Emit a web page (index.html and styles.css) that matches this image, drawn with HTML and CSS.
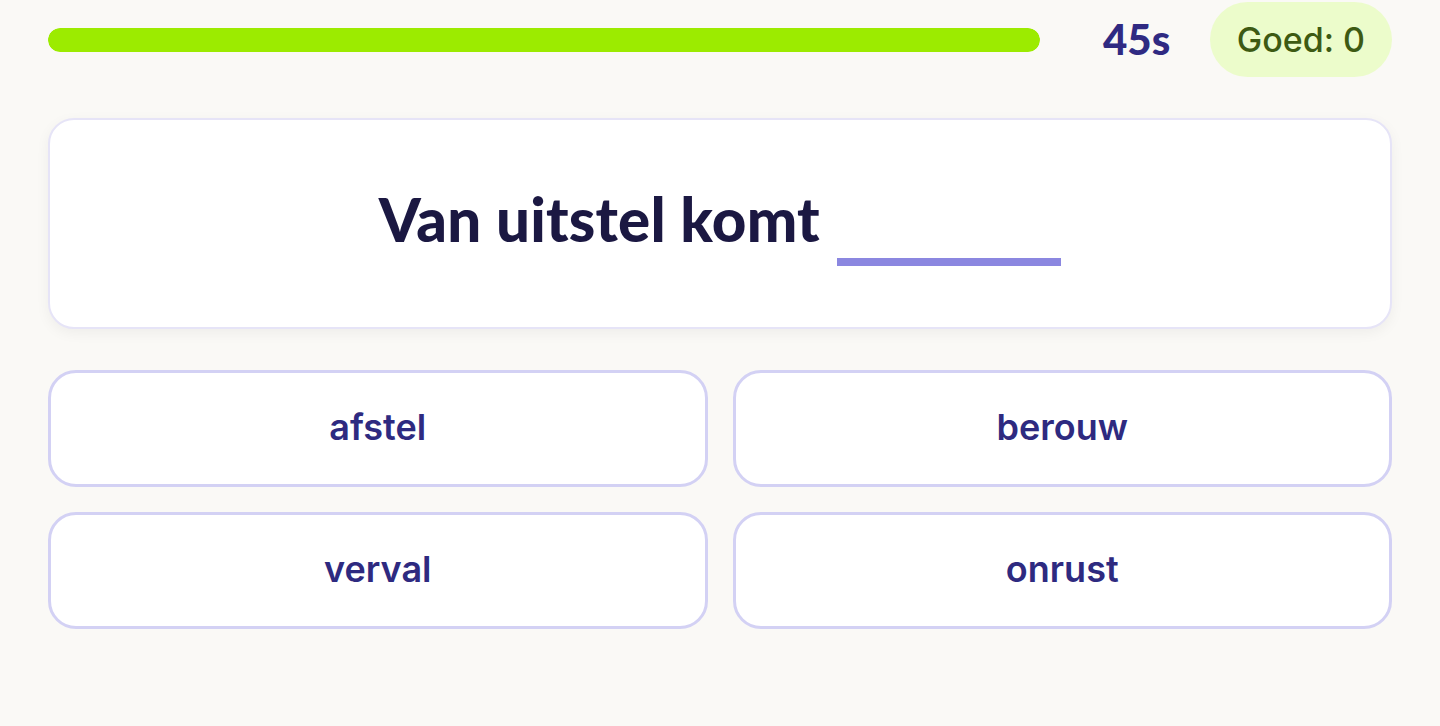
FILE: index.html
```html
<!DOCTYPE html>
<html lang="nl">
<head>
  <meta charset="UTF-8">
  <meta name="viewport" content="width=device-width, initial-scale=1.0">
  <title>Spreekwoorden</title>
  <link rel="stylesheet" href="styles.css">
</head>
<body>
  <div class="spel">
    <!-- Bovenbalk -->
    <div class="bovenbalk">
      <div class="tijdbalk"><div class="tijd-vulling" style="width: 100%"></div></div>
      <span class="seconden">45s</span>
      <span class="score">Goed: 0</span>
    </div>

    <!-- Vraag -->
    <div class="vraag-kaart">
      <h1 class="vraag">Van uitstel komt <span class="gat"></span></h1>
    </div>

    <!-- Antwoorden -->
    <div class="antwoorden">
      <button class="antwoord">afstel</button>
      <button class="antwoord">berouw</button>
      <button class="antwoord">verval</button>
      <button class="antwoord">onrust</button>
    </div>
  </div>
</body>
</html>
```

FILE: styles.css
```css
body {
  background: #faf9f6;
  font-family: Inter, "Liberation Sans", sans-serif;
  margin: 0;
}

.spel {
  padding: 2px 48px 0;
}

.bovenbalk {
  display: flex;
  align-items: center;
  height: 75px;
}

.tijdbalk {
  width: 992px;
  height: 24px;
  border-radius: 12px;
  overflow: hidden;
}

.tijd-vulling {
  height: 100%;
  background-color: #9ceb00;
  border-radius: 12px;
}

.seconden {
  margin-left: 63px;
  margin-bottom: 2px;
  font-family: Lato, sans-serif;
  font-size: 42px;
  font-weight: 900;
  color: #2f2a82;
}

.score {
  margin-left: auto;
  height: 75px;
  padding: 0 27px;
  display: flex;
  align-items: center;
  background-color: #ecfccb;
  border-radius: 38px;
  font-size: 34px;
  font-weight: 500;
  color: #3d5a13;
}

.vraag-kaart {
  margin-top: 41px;
  height: 207px;
  background: white;
  border: 2px solid #e6e4f7;
  border-radius: 26px;
  box-shadow: 0 4px 14px rgba(0, 0, 0, 0.05);
  display: flex;
  justify-content: center;
  align-items: center;
}

.vraag {
  margin: 2px 0 0;
  font-family: Lato, sans-serif;
  font-weight: 900;
  font-size: 60px;
  letter-spacing: 0.2px;
  color: #1b1842;
}

.gat {
  display: inline-block;
  width: 224px;
  margin-left: 3px;
  border-bottom: 8px solid #8b87e0;
  vertical-align: -24px;
}

.antwoorden {
  margin-top: 41px;
  display: grid;
  grid-template-columns: 1fr 1fr;
  gap: 25px;
}

.antwoord {
  height: 117px;
  padding-bottom: 4px;
  background: white;
  border: 3px solid #d3d1f4;
  border-radius: 28px;
  font-family: Inter, sans-serif;
  font-size: 36px;
  font-weight: 600;
  color: #2e2a80;
  cursor: pointer;
}

.antwoord:hover {
  background-color: #f4f3ff;
}
```
